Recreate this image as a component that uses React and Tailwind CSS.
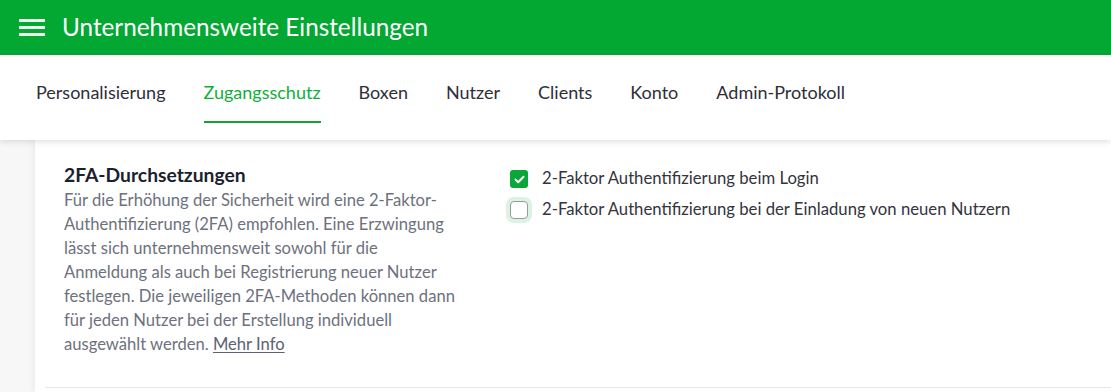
import { useState } from "react";

const tabs = ["Personalisierung", "Zugangsschutz", "Boxen", "Nutzer", "Clients", "Konto", "Admin-Protokoll"];

function Check({ checked, focus, onClick }) {
  if (checked) {
    return (
      <button
        onClick={onClick}
        className="w-[18px] h-[18px] rounded-[3px] bg-[#0aa63a] flex items-center justify-center shrink-0"
      >
        <svg width="11" height="9" viewBox="0 0 11 9" fill="none">
          <path d="M1.5 4.6 L4.2 7.2 L9.5 1.8" stroke="white" strokeWidth="2" strokeLinecap="round" strokeLinejoin="round" />
        </svg>
      </button>
    );
  }
  return (
    <button
      onClick={onClick}
      className={`w-[18px] h-[18px] rounded-[4px] border border-[#9a9a9a] bg-white shrink-0 ${focus ? "ring-4 ring-[#dcf2e2]" : ""}`}
    />
  );
}

export default function App() {
  const [active, setActive] = useState(1);
  const [login, setLogin] = useState(true);
  const [invite, setInvite] = useState(false);

  return (
    <div className="w-[1111px] h-[392px] overflow-hidden bg-[#f7f7f7]" style={{ fontFamily: "Lato, 'Noto Sans', sans-serif" }}>
      <header className="h-[55px] bg-[#02a832] flex items-center pl-[19px]">
        <div className="flex flex-col gap-[4px]">
          <span className="block w-[26px] h-[3px] bg-[#eef7ee]" />
          <span className="block w-[26px] h-[3px] bg-[#eef7ee]" />
          <span className="block w-[26px] h-[3px] bg-[#eef7ee]" />
        </div>
        <h1 className="ml-[17px] text-white text-[24.3px] leading-none">Unternehmensweite Einstellungen</h1>
      </header>

      <nav className="relative z-10 h-[85px] bg-white flex gap-[38px] pl-[36px] shadow-[0_2px_6px_rgba(0,0,0,0.12)]">
        {tabs.map((t, i) => (
          <button key={t} onClick={() => setActive(i)} className="flex flex-col items-stretch pt-[25px]">
            <span className={`text-[18px] leading-[24px] ${i === active ? "text-[#0db03b]" : "text-[#2e2e38]"}`}>{t}</span>
            <span className={`mt-[17px] h-[2px] ${i === active ? "bg-[#16a03a]" : "bg-transparent"}`} />
          </button>
        ))}
      </nav>

      <main className="ml-[35px] bg-white h-[252px] shadow-[-2px_0_6px_rgba(0,0,0,0.05)]">
        <div className="flex gap-[54px] pl-[19px] pt-[22px] pb-[31px] ml-[10px] border-b border-[#e6e6e6]">
          <section className="w-[392px] shrink-0">
            <h2 className="text-[19.3px] leading-[26px] font-bold text-[#1b1f2e]">2FA-Durchsetzungen</h2>
            <p className="text-[16.6px] leading-[24px] text-[#6d717d]">
              Für die Erhöhung der Sicherheit wird eine 2-Faktor-Authentifizierung (2FA) empfohlen. Eine Erzwingung
              lässt sich unternehmensweit sowohl für die Anmeldung als auch bei Registrierung neuer Nutzer festlegen.
              Die jeweiligen 2FA-Methoden können dann für jeden Nutzer bei der Erstellung individuell ausgewählt
              werden. <a href="#" className="underline underline-offset-2 text-[#5d6170]">Mehr Info</a>
            </p>
          </section>
          <section className="pt-[5px] flex flex-col gap-[7px]">
            <label className="flex items-center gap-[14px] h-[24px]">
              <Check checked={login} onClick={() => setLogin(!login)} />
              <span className="text-[16.7px] text-[#34343c]">2-Faktor Authentifizierung beim Login</span>
            </label>
            <label className="flex items-center gap-[14px] h-[24px]">
              <Check checked={invite} focus onClick={() => setInvite(!invite)} />
              <span className="text-[16.7px] text-[#34343c]">2-Faktor Authentifizierung bei der Einladung von neuen Nutzern</span>
            </label>
          </section>
        </div>
      </main>
    </div>
  );
}
